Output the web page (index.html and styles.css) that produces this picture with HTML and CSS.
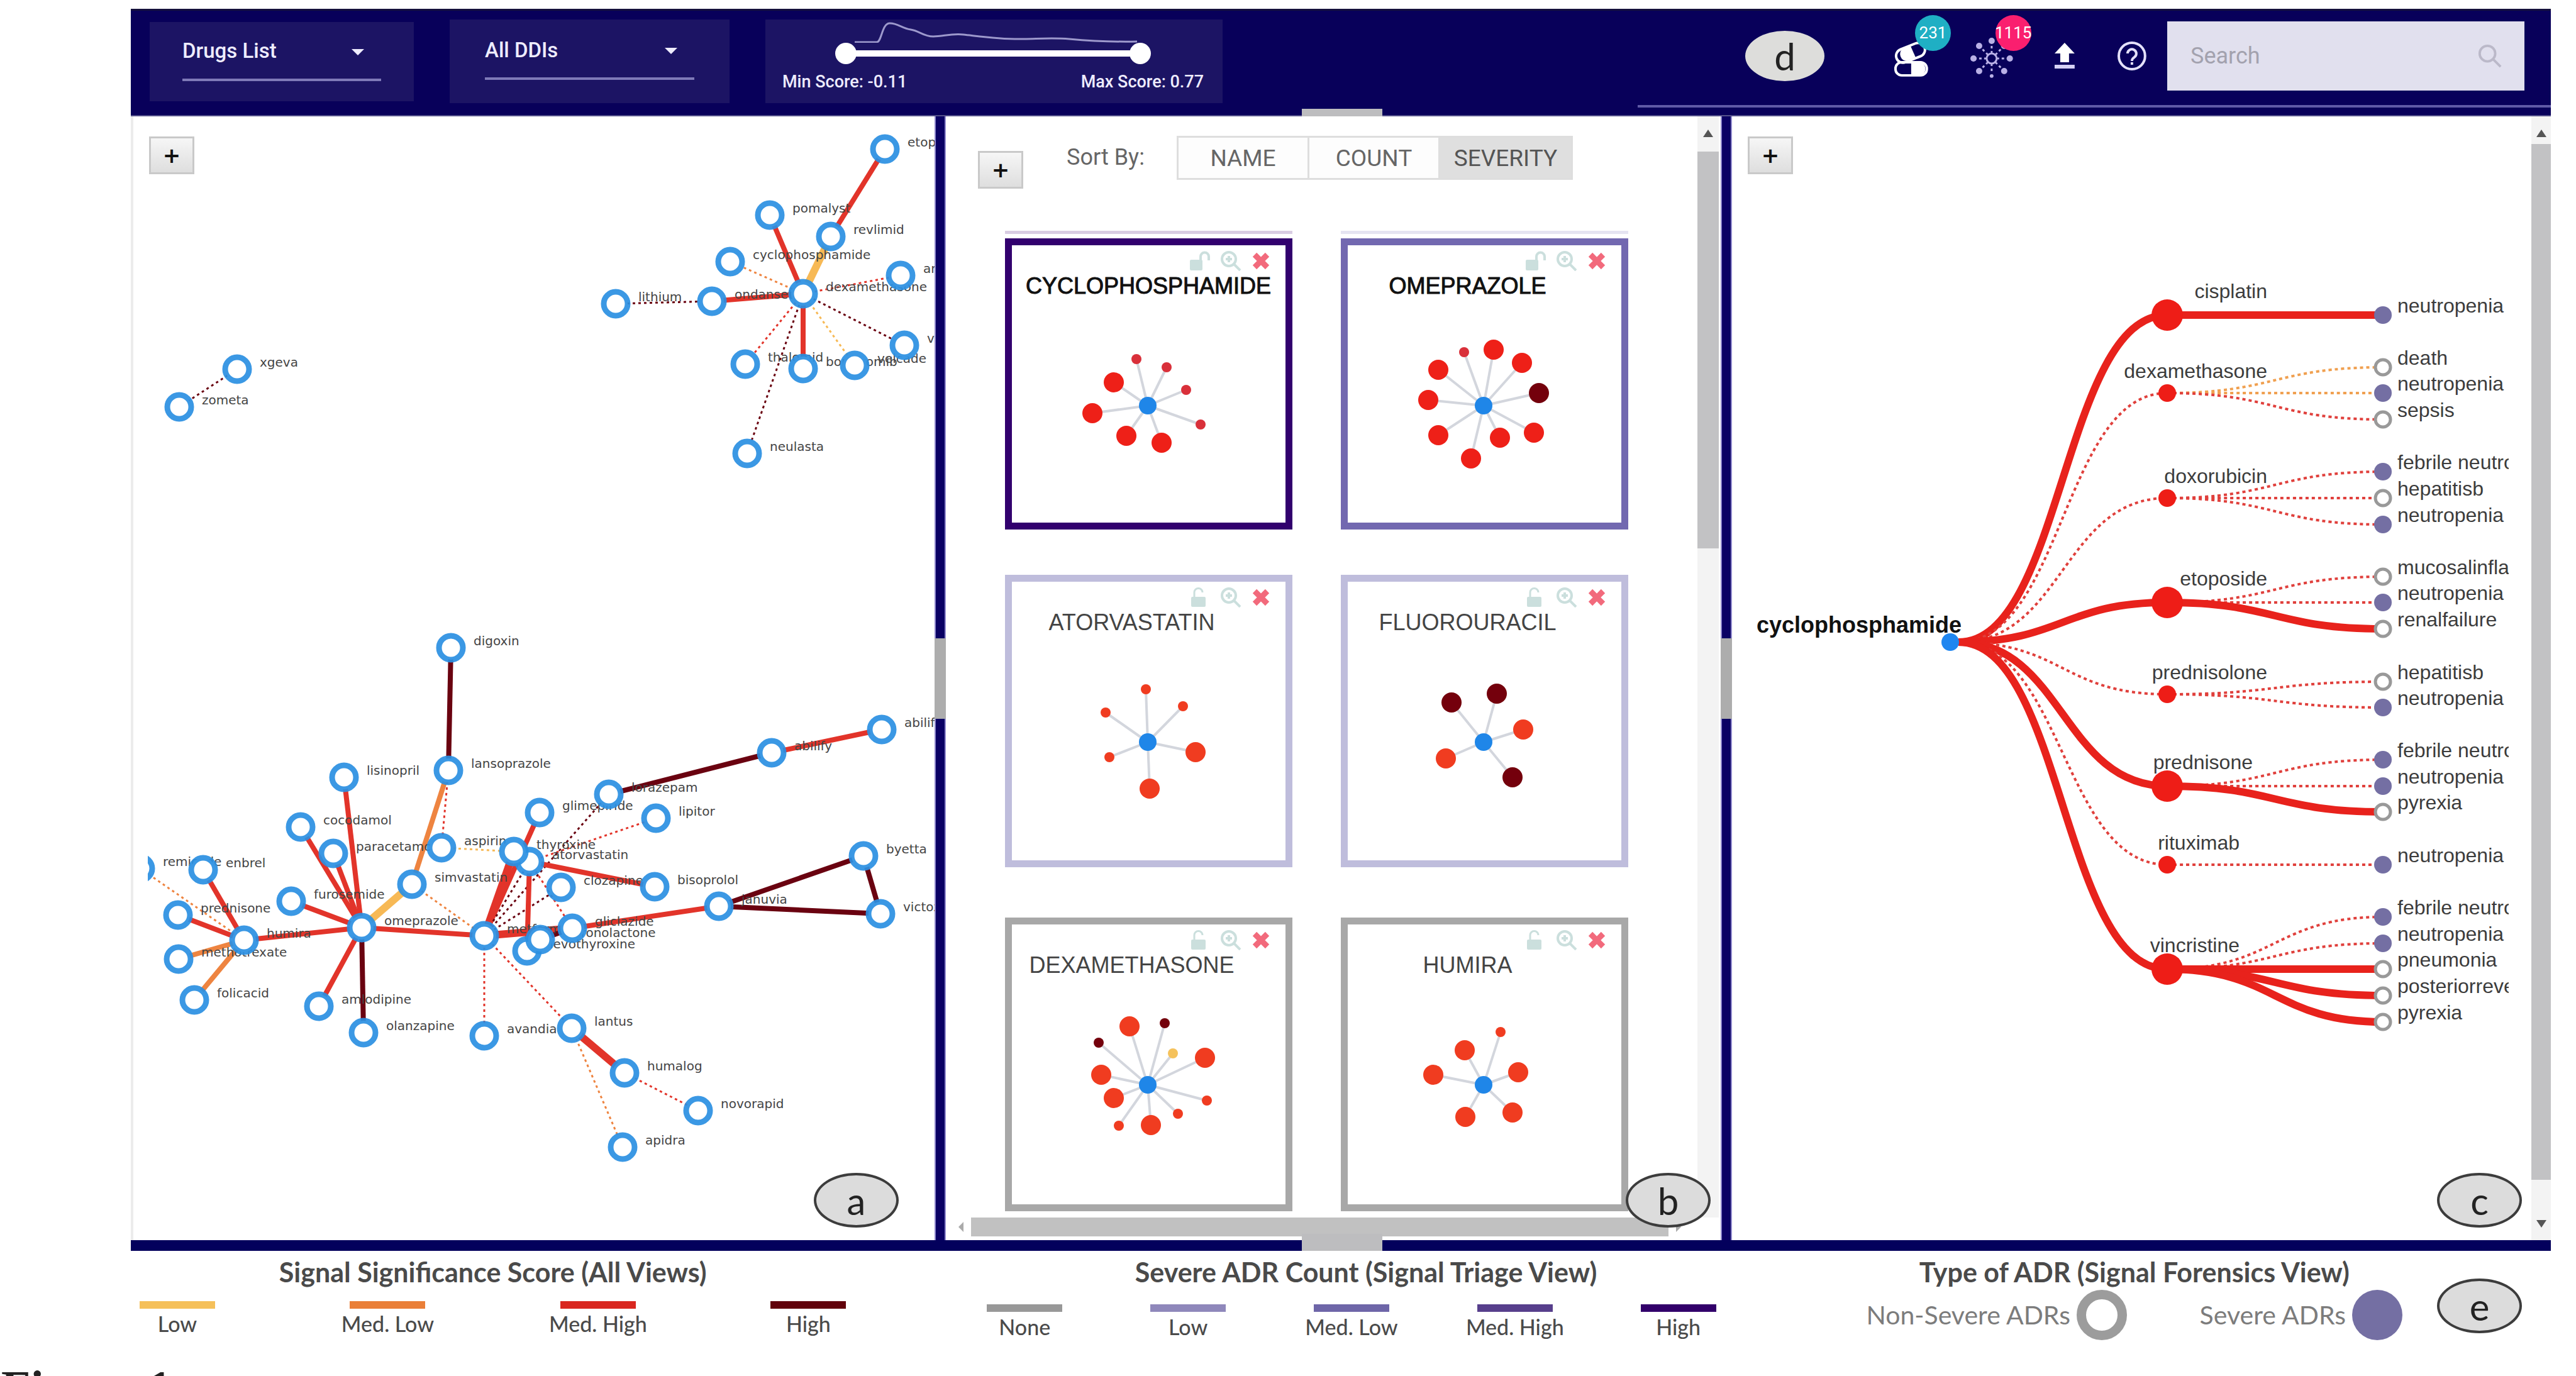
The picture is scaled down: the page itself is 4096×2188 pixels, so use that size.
FILE: index.html
```html
<!DOCTYPE html>
<html lang="en">
<head>
<meta charset="utf-8">
<meta name="viewport" content="width=device-width, initial-scale=1">
<title>Drug Interaction Signals</title>
<link rel="stylesheet" href="styles.css">
</head>
<body>
<svg class="sprite" aria-hidden="true">
  <symbol id="i-unlock" viewBox="0 0 36 32">
    <rect x="1" y="14" width="20" height="17" rx="2" fill="currentColor"/>
    <path d="M18 15V9a6.500 6.500 0 0 1 13 0v6" fill="none" stroke="currentColor" stroke-width="4"/>
  </symbol>
  <symbol id="i-unlock-thin" viewBox="0 0 36 32">
    <rect x="3" y="15" width="23" height="16" rx="2" fill="currentColor"/>
    <path d="M8 15V8a6.500 6.500 0 0 1 13 0" fill="none" stroke="currentColor" stroke-width="3"/>
  </symbol>
  <symbol id="i-zoom" viewBox="0 0 36 32">
    <circle cx="15" cy="13" r="11" fill="none" stroke="currentColor" stroke-width="4"/>
    <path d="M10 13h10M15 8v10M23 21l10 10" fill="none" stroke="currentColor" stroke-width="4"/>
  </symbol>
  <symbol id="i-close" viewBox="0 0 28 28">
    <path d="M4 4l20 20M24 4L4 24" fill="none" stroke="currentColor" stroke-width="9"/>
  </symbol>
</svg>

<div class="app">
  <header class="topbar">
    <div class="filters">
      <div class="filter filter-drugs">
        <div class="picker">
          <select aria-label="Drugs list"><option>Drugs List</option></select>
          <span class="caret"></span>
        </div>
      </div>
      <div class="filter filter-ddis">
        <div class="picker">
          <select aria-label="DDI filter"><option>All DDIs</option></select>
          <span class="caret"></span>
        </div>
      </div>
      <div class="filter filter-score">
        <svg class="histogram" viewBox="0 0 502 37" aria-hidden="true">
          <path d="M31 36H66C74 36 74 7 86 6S106 14 120 16S140 27 156 27S184 22 204 24S262 32 300 31S350 29 372 31S430 36 480 35"/>
        </svg>
        <div class="range">
          <input type="range" aria-label="Min score" min="-0.11" max="0.77" step="0.01" value="-0.11">
          <input type="range" aria-label="Max score" min="-0.11" max="0.77" step="0.01" value="0.77">
        </div>
        <div class="range-labels"><span>Min Score: -0.11</span><span>Max Score: 0.77</span></div>
      </div>
    </div>
    <div class="tools">
      <span class="tag tag-plain">d</span>
      <button class="tool tool-large" aria-label="Drugs">
        <svg viewBox="0 0 70 70" aria-hidden="true">
          <g fill="none" stroke="#fff" stroke-width="4">
            <rect x="10" y="19" width="48" height="22" rx="11" transform="rotate(-22 34 30)"/>
            <rect x="10" y="45" width="50" height="21" rx="10"/>
          </g>
          <path d="M20 25L34 19L42 37L27 43A11 11 0 0 1 20 25Z" fill="#fff"/>
          <path d="M35 45H50A11 11 0 0 1 50 66H35Z" fill="#fff"/>
        </svg>
        <span class="count count-teal">231</span>
      </button>
      <button class="tool tool-large" aria-label="Reactions">
        <svg viewBox="0 0 70 70" aria-hidden="true">
          <g fill="none" stroke="#b9b0e6" stroke-width="3">
            <circle cx="35" cy="39" r="8"/>
            <path d="M35 31V15M35 47V63M27 39H9M43 39H61M29 33L17 21M41 33L53 21M29 45L17 57M41 45L53 57" stroke-dasharray="4 4"/>
          </g>
          <g fill="#b9b0e6">
            <circle cx="35" cy="11" r="5"/><circle cx="35" cy="67" r="3"/><circle cx="6" cy="39" r="5"/><circle cx="64" cy="39" r="5"/>
            <circle cx="15" cy="19" r="5"/><circle cx="55" cy="19" r="5"/><circle cx="15" cy="59" r="5"/><circle cx="55" cy="59" r="5"/>
          </g>
        </svg>
        <span class="count count-pink">1115</span>
      </button>
      <button class="tool" aria-label="Upload">
        <svg viewBox="0 0 48 48" aria-hidden="true"><path d="M24 3L40 20H31V34H17V20H8Z" fill="#fff"/><path d="M8 38H40V44H8Z" fill="#d6d2f5"/></svg>
      </button>
      <button class="tool" aria-label="Help">
        <svg viewBox="0 0 48 48" aria-hidden="true">
          <circle cx="25" cy="24" r="21" fill="none" stroke="#e4e1fb" stroke-width="4"/>
          <path d="M18 20a7 7 0 1 1 11 6c-3 2-4 3-4 6" fill="none" stroke="#e4e1fb" stroke-width="4"/>
          <path d="M23 34h4v4h-4z" fill="#e4e1fb"/>
        </svg>
      </button>
      <div class="search">
        <input type="text" placeholder="Search" aria-label="Search">
        <svg viewBox="0 0 42 42" aria-hidden="true"><circle cx="17" cy="17" r="13"/><path d="M27 27L39 39"/></svg>
      </div>
    </div>
    <span class="grip grip-top"></span>
  </header>

  <main class="workspace">
    <section class="panel" aria-label="Signal overview">
      <svg class="network" id="network"></svg>
      <button class="add add-over">+</button>
      <span class="tag tag-a">a</span>
    </section>
    <div class="splitter"><span class="splitter-grip"></span></div>

    <section class="panel triage" aria-label="Signal triage">
      <div class="triage-body">
        <div class="sortbar">
          <button class="add add-low">+</button>
          <span class="sort-label">Sort By:</span>
          <div class="sort-group">
            <button>NAME</button><button>COUNT</button><button class="active">SEVERITY</button>
          </div>
        </div>
        <div class="lanes"><span class="lane lane-high"></span><span class="lane lane-mid"></span></div>
        <div class="cards">
          <article class="card sev-high">
            <div class="card-icons"><svg class="ic"><use href="#i-unlock"/></svg><svg class="ic"><use href="#i-zoom"/></svg><svg class="ic ic-close"><use href="#i-close"/></svg></div>
            <h3>CYCLOPHOSPHAMIDE</h3><svg class="star" data-star="cyclophosphamide"></svg>
          </article>
          <article class="card sev-medlow">
            <div class="card-icons"><svg class="ic"><use href="#i-unlock"/></svg><svg class="ic"><use href="#i-zoom"/></svg><svg class="ic ic-close"><use href="#i-close"/></svg></div>
            <h3>OMEPRAZOLE</h3><svg class="star" data-star="omeprazole"></svg>
          </article>
          <article class="card sev-low">
            <div class="card-icons"><svg class="ic"><use href="#i-unlock-thin"/></svg><svg class="ic"><use href="#i-zoom"/></svg><svg class="ic ic-close"><use href="#i-close"/></svg></div>
            <h3>ATORVASTATIN</h3><svg class="star" data-star="atorvastatin"></svg>
          </article>
          <article class="card sev-low">
            <div class="card-icons"><svg class="ic"><use href="#i-unlock-thin"/></svg><svg class="ic"><use href="#i-zoom"/></svg><svg class="ic ic-close"><use href="#i-close"/></svg></div>
            <h3>FLUOROURACIL</h3><svg class="star" data-star="fluorouracil"></svg>
          </article>
          <article class="card sev-none">
            <div class="card-icons"><svg class="ic"><use href="#i-unlock-thin"/></svg><svg class="ic"><use href="#i-zoom"/></svg><svg class="ic ic-close"><use href="#i-close"/></svg></div>
            <h3>DEXAMETHASONE</h3><svg class="star" data-star="dexamethasone"></svg>
          </article>
          <article class="card sev-none">
            <div class="card-icons"><svg class="ic"><use href="#i-unlock-thin"/></svg><svg class="ic"><use href="#i-zoom"/></svg><svg class="ic ic-close"><use href="#i-close"/></svg></div>
            <h3>HUMIRA</h3><svg class="star" data-star="humira"></svg>
          </article>
        </div>
      </div>
      <div class="vscroll triage-vscroll"><span class="arrow arrow-up"></span><span class="thumb"></span></div>
      <div class="hscroll"><span class="arrow arrow-left"></span><span class="thumb"></span><span class="arrow arrow-right"></span></div>
      <span class="tag tag-b">b</span>
    </section>
    <div class="splitter"><span class="splitter-grip"></span></div>

    <section class="panel forensics" aria-label="Signal forensics">
      <svg class="tree" id="tree"></svg>
      <div class="vscroll forensics-vscroll"><span class="arrow arrow-up"></span><span class="thumb"></span><span class="arrow arrow-down"></span></div>
      <button class="add add-over">+</button>
      <span class="tag tag-c">c</span>
    </section>
  </main>
  <div class="bottombar"><span class="grip grip-bottom"></span></div>

  <footer class="legend">
    <div class="legend-score">
      <h2>Signal Significance Score (All Views)</h2>
      <ul class="swatches">
        <li><span class="bar bar-yellow"></span>Low</li>
        <li><span class="bar bar-orange"></span>Med. Low</li>
        <li><span class="bar bar-red"></span>Med. High</li>
        <li><span class="bar bar-dark"></span>High</li>
      </ul>
    </div>
    <div class="legend-count">
      <h2>Severe ADR Count (Signal Triage View)</h2>
      <ul class="swatches">
        <li><span class="bar bar-none"></span>None</li>
        <li><span class="bar bar-low"></span>Low</li>
        <li><span class="bar bar-medlow"></span>Med. Low</li>
        <li><span class="bar bar-medhigh"></span>Med. High</li>
        <li><span class="bar bar-high"></span>High</li>
      </ul>
    </div>
    <div class="legend-type">
      <h2>Type of ADR (Signal Forensics View)</h2>
      <div class="types">
        <span class="type">Non-Severe ADRs <i class="dot dot-ring"></i></span>
        <span class="type">Severe ADRs <i class="dot dot-full"></i></span>
      </div>
    </div>
    <span class="tag tag-e">e</span>
  </footer>
</div>
<p class="caption">Figure 1</p>
<script src="app.js"></script>
</body>
</html>
```
FILE: styles.css
```css
* { box-sizing: border-box; }
html, body { height: 100%; margin: 0; overflow: hidden; background: #fff; }
body { display: flex; flex-direction: column; font-family: Roboto, sans-serif; color: #333; }
h2, h3, p, ul { margin: 0; padding: 0; }
button, select, input { font: inherit; color: inherit; margin: 0; padding: 0; border: 0; background: none; }
.sprite { position: absolute; width: 0; height: 0; }

.app { flex: 1; min-height: 0; display: flex; flex-direction: column; padding: 14px 40px 0 208px; }

/* top bar */
.topbar { position: relative; flex: none; height: 171px; display: flex; justify-content: space-between; background: #08005a; border-top: 3px solid #14103c; border-bottom: 2px solid #55528c; }
.filters { display: flex; align-items: center; gap: 57px; padding: 14px 0 19px 30px; }
.filter { background: #1c1464; color: #eeecff; font-weight: 500; }
.filter-drugs { width: 420px; height: 126px; padding: 20px 52px 0; }
.filter-ddis { width: 445px; height: 133px; padding: 22px 56px 0; }
.picker { position: relative; border-bottom: 4px solid #7f7ab8; }
.picker select { display: block; width: 100%; height: 70px; padding-bottom: 18px; font-size: 33px; appearance: none; }
.caret { position: absolute; right: 27px; top: 23px; border: 10px solid transparent; border-top: 10px solid #eeecff; border-bottom: 0; pointer-events: none; }
.filter-score { width: 727px; height: 133px; padding: 0 30px 0 27px; }
.histogram { display: block; width: 502px; height: 37px; margin: 0 auto; fill: none; stroke: #9d99cc; stroke-width: 3; }
.range { display: grid; width: 502px; margin: 0 auto; }
.range input { grid-area: 1 / 1; width: 100%; height: 34px; appearance: none; pointer-events: none; }
.range input:first-child { background: linear-gradient(#fff, #fff) center / 470px 10px no-repeat; }
.range input::-webkit-slider-thumb { appearance: none; width: 34px; height: 34px; border-radius: 50%; background: #fff; pointer-events: auto; }
.range-labels { display: flex; justify-content: space-between; margin-top: 10px; font-size: 27px; line-height: 36px; }

.tools { display: flex; align-items: center; width: 1452px; height: 154px; padding: 0 42px 6px 171px; border-bottom: 4px solid #5f5aa6; }
.tool { position: relative; width: 48px; height: 48px; margin-right: 58px; }
.tool-large { width: 70px; height: 70px; }
.tool svg { display: block; width: 100%; height: 100%; }
.count { position: absolute; left: 41px; top: -30px; width: 57px; height: 57px; border-radius: 50%; font-size: 26px; line-height: 57px; text-align: center; color: #fff; display: flex; justify-content: center; }
.count-teal { background: #1fafc4; }
.count-pink { background: #fa1f6f; }
.search { display: flex; align-items: center; flex: 1; height: 110px; margin-left: -25px; padding: 0 35px 0 37px; background: #e1e0ee; }
.search input { flex: 1; min-width: 0; font-size: 36px; color: #555; outline: 0; }
.search input::placeholder { color: #a3a2ae; opacity: 1; }
.search svg { width: 40px; height: 40px; fill: none; stroke: #bbb9c9; stroke-width: 4; }

.grip { position: absolute; left: 50%; margin-left: -62px; width: 128px; background: #bdbdbf; }
.grip-top { bottom: -6px; height: 16px; }
.grip-bottom { bottom: 0; height: 27px; }

/* workspace */
.workspace { flex: 1; min-height: 0; display: grid; grid-template-columns: minmax(0, 1278fr) 18px minmax(0, 1232fr) 18px minmax(0, 1302fr); grid-template-rows: minmax(0, 1fr); }
.panel { position: relative; min-width: 0; background: #fff; }
.panel:first-child { border-left: 4px solid #ececec; padding-left: 23px; }
.splitter { display: flex; align-items: center; background: #0a0064; border: solid #8f88cc; border-width: 0 2px; }
.splitter-grip { flex: 1; height: 128px; margin: 0 -2px; background: #adadad; }
.network, .tree { display: block; width: 100%; height: 100%; }
.bottombar { position: relative; flex: none; height: 17px; background: #03005c; }

.add { width: 72px; height: 60px; border: 3px solid #c9c9c9; background: linear-gradient(#f6f6f6, #dedede); font: bold 34px/50px "DejaVu Sans", sans-serif; color: #111; text-align: center; }
.add-over { position: absolute; left: 25px; top: 32px; }
.add-low { margin-top: 24px; }

.tag { display: flex; align-items: center; justify-content: center; flex: none; width: 135px; height: 87px; border: 4px solid #3c3c3c; border-radius: 50%; background: #dcdcdc; font: 60px/60px Lato, sans-serif; color: #222; }
.tag-plain { width: 126px; height: 80px; border: 0; margin-right: 103px; background: #dddddb; }
.tag-a, .tag-b, .tag-c { position: absolute; bottom: 20px; }
.tag-a { right: 57px; }
.tag-b { right: 16px; }
.tag-c { right: 46px; }

/* triage */
.triage { display: grid; grid-template-columns: minmax(0, 1fr) 34px; grid-template-rows: minmax(0, 1fr) 36px; padding-right: 3px; }
.triage-body { overflow: hidden; }
.sortbar { display: flex; align-items: flex-start; padding: 31px 0 0 51px; height: 182px; }
.sort-label { width: 175px; margin-left: 69px; font-size: 36px; line-height: 69px; color: #666; }
.sort-group { display: flex; border: 3px solid #dedede; }
.sort-group button { width: 208px; height: 64px; font-size: 37px; color: #666; background: #fdfdfd; border-right: 3px solid #dedede; }
.sort-group button:last-child { border-right: 0; }
.sort-group .active { background: #dfdfdf; color: #555; }
.lanes, .cards { display: grid; grid-template-columns: 457px 457px; column-gap: 77px; padding-left: 94px; }
.lane { height: 5px; margin-bottom: 7px; }
.lane-high { background: #d9cde2; }
.lane-mid { background: #e5e4f1; }
.cards { grid-template-rows: 463px 465px 475px; row-gap: 72px; }
.card { border: 11px solid; }
.card h3 { margin-top: 5px; padding: 0 76px 0 22px; font: 36px/40px "Liberation Sans", Arial, sans-serif; text-align: center; white-space: nowrap; color: #444; }
.card-icons { display: flex; justify-content: flex-end; align-items: center; gap: 12px; height: 30px; margin-top: 10px; padding-right: 25px; color: #cbdfdd; }
.ic { width: 36px; height: 32px; }
.ic-close { width: 28px; height: 28px; margin-left: 4px; color: #f26a7c; }
.star { display: block; width: 300px; height: 230px; margin: 53px auto 0; overflow: visible; }
.sev-high { border-color: #32006e; }
.sev-medlow { border-color: #7268b0; }
.sev-high h3, .sev-medlow h3 { color: #111; -webkit-text-stroke: 1px #111; }
.sev-low { border-color: #bfbddc; }
.sev-none { border-color: #a8a8a8; margin-top: 8px; }

/* scroll bars */
.vscroll { display: flex; flex-direction: column; align-items: center; background: #f3f3f3; }
.vscroll .thumb { width: 100%; background: #c2c2c4; }
.triage-vscroll .thumb { height: 631px; margin-top: 23px; }
.arrow { border: 8px solid transparent; }
.arrow-up { margin-top: 21px; border-top: 0; border-bottom: 12px solid #555; }
.arrow-down { margin: 64px 0 20px; border-bottom: 0; border-top: 12px solid #555; }
.arrow-left { border-left: 0; border-right-color: #aaa; }
.arrow-right { border-right: 0; border-left-color: #aaa; }
.hscroll { grid-column: 1 / -1; display: flex; align-items: center; gap: 12px; height: 30px; padding: 0 60px 0 20px; }
.hscroll .thumb { flex: 1; height: 100%; background: #c1c1c1; }

/* forensics */
.forensics { display: grid; grid-template-columns: minmax(0, 1fr) 31px; column-gap: 36px; }
.forensics-vscroll .thumb { flex: 1; margin-top: 11px; }

/* diagrams */
.solid { stroke-width: 8; }
.thick { stroke-width: 12; }
.dotted { stroke-width: 3; stroke-dasharray: 4 5; }
.ring { fill: #fff; stroke: #2a8fe2; stroke-width: 9; stroke-opacity: .92; }
.network text { font: 20px "DejaVu Sans", sans-serif; fill: #444; }
.spoke { stroke: #d3d6dd; stroke-width: 4; }
.link { fill: none; stroke: #e8221c; stroke-width: 12; }
.link-dotted { fill: none; stroke-width: 4; stroke-dasharray: 5 5; }
.tree text { font: 32px "Liberation Sans", Arial, sans-serif; fill: #3c3c3c; }
.tree .root { font: bold 36px "Liberation Sans", Arial, sans-serif; fill: #111; }
.leaf-severe { fill: #746fa3; }
.leaf-plain { fill: #fff; stroke: #999; stroke-width: 5; }

/* legend */
.legend { flex: none; height: 179px; display: grid; grid-template-columns: 14fr 1124fr 224fr 1160fr 239fr 853fr 55fr 133fr 46fr; padding-top: 10px; font-family: Lato, sans-serif; color: #4a4a4a; }
.legend h2 { font-size: 43px; line-height: 48px; text-align: center; white-space: nowrap; }
.legend-score { grid-column: 2; }
.legend-count { grid-column: 4; }
.legend-count h2 { padding-left: 46px; }
.legend-type { grid-column: 6; }
.tag-e { grid-column: 8; margin-top: 34px; }
.swatches { display: flex; justify-content: space-between; list-style: none; margin-top: 22px; font-size: 34px; font-weight: 500; line-height: 36px; }
.legend-count .swatches { margin-top: 27px; }
.swatches li { width: 120px; display: flex; flex-direction: column; align-items: center; white-space: nowrap; }
.bar { width: 120px; height: 12px; margin-bottom: 6px; }
.bar-yellow { background: #f5c05a; }
.bar-orange { background: #ea7f38; }
.bar-red { background: #d92720; }
.bar-dark { background: #62020c; }
.bar-none { background: #989898; }
.bar-low { background: #8f88bb; }
.bar-medlow { background: #6e66a8; }
.bar-medhigh { background: #573f8c; }
.bar-high { background: #32006a; }
.types { display: flex; justify-content: space-between; margin-top: 4px; }
.type { display: flex; align-items: center; gap: 10px; font-size: 41px; line-height: 80px; color: #7c7c7c; }
.dot { width: 80px; height: 80px; border-radius: 50%; }
.dot-ring { border: 15px solid #9c9c9c; }
.dot-full { background: #746fa3; }

.caption { flex: none; height: 20px; padding-left: 2px; font: bold 76px/76px "Liberation Serif", serif; color: #222; white-space: nowrap; }
```
FILE: app.js
```js
const NS = 'http://www.w3.org/2000/svg';
const UNIT = 4096 / 1568;
const COLORS = { L: '#f7b955', ML: '#ee8440', MH: '#e2342a', H: '#6a0210' };

function add(parent, name, attrs, text) {
  const el = document.createElementNS(NS, name);
  for (const key in attrs) el.setAttribute(key, attrs[key]);
  if (text) el.textContent = text;
  parent.appendChild(el);
  return el;
}

/* Overview network: id -> [x, y, label] */
const nodes = {
  xgeva: [144.5, 225, 'xgeva'], zometa: [109, 248, 'zometa'],
  etoposide: [538.6, 90.8, 'etoposide'], pomalyst: [468.5, 131, 'pomalyst'], revlimid: [506, 144, 'revlimid'],
  cyclo: [444.5, 159.3, 'cyclophosphamide'], ondan: [433.4, 183.7, 'ondansetron'], lithium: [375, 185, 'lithium'],
  aredia: [548.5, 167.8, 'aredia'], thalomid: [453.7, 222, 'thalomid'], bort: [489.1, 224.5, 'bortezomib'],
  velcade: [520.3, 222.7, 'velcade'], vinc: [550.5, 210.5, 'vincristine'], neulasta: [455, 276.4, 'neulasta'],
  dexa: [489.1, 179, 'dexamethasone'],
  digoxin: [274.5, 394.5, 'digoxin'], lanso: [273, 469.2, 'lansoprazole'], lisin: [209.4, 473.6, 'lisinopril'],
  coco: [183, 503.7, 'cocodamol'], para: [202.9, 519.8, 'paracetamol'], aspirin: [268.9, 516.3, 'aspirin'],
  simva: [250.9, 538.4, 'simvastatin'], furo: [177.2, 548.9, 'furosemide'], ome: [220, 564.8, 'omeprazole'],
  humira: [148.4, 572.7, 'humira'], remi: [85.5, 529, 'remicade'], enbrel: [123.6, 529.8, 'enbrel'],
  pred: [108.2, 557.1, 'prednisone'], metho: [108.7, 583.9, 'methotrexate'], folic: [118.2, 608.9, 'folicacid'],
  amlo: [194, 612.9, 'amlodipine'], olan: [221.4, 628.7, 'olanzapine'], avandia: [294.9, 630.8, 'avandia'],
  glime: [328.7, 494.8, 'glimepiride'], ator: [322.4, 524.7, 'atorvastatin'], thyro: [312.9, 518.5, 'thyroxine'],
  cloza: [341.4, 540.3, 'clozapine'], biso: [398.6, 540.1, 'bisoprolol'], loraz: [370.6, 483.7, 'lorazepam'],
  lipitor: [399.5, 498.5, 'lipitor'], abilify: [469.8, 458.5, 'abilify'], abil: [536.9, 444.5, 'abilify'],
  byetta: [525.9, 521.3, 'byetta'], victoza: [535.9, 556.7, 'victoza'], januvia: [437.7, 552.1, 'januvia'],
  glic: [348.6, 565.5, 'gliclazide'], levo: [320.7, 579.1, 'levothyroxine'], spiro: [328.8, 572.1, 'spironolactone'],
  metf: [294.7, 569.9, 'metformin'], lantus: [348.2, 626.1, 'lantus'], humalog: [380.1, 653.5, 'humalog'],
  novo: [425.2, 676.3, 'novorapid'], apidra: [379, 698.5, 'apidra']
};
const edges = [
  'xgeva zometa H dotted', 'etoposide revlimid MH solid', 'dexa revlimid L thick', 'dexa pomalyst MH solid',
  'dexa cyclo ML dotted', 'dexa ondan MH solid', 'lithium ondan H dotted', 'dexa aredia MH dotted',
  'dexa thalomid MH dotted', 'dexa neulasta H dotted', 'dexa bort MH solid', 'dexa velcade L dotted', 'dexa vinc H dotted',
  'digoxin lanso H solid', 'lanso simva ML solid', 'lanso aspirin MH dotted', 'simva ome L thick', 'aspirin thyro L dotted',
  'lisin ome MH solid', 'coco ome MH solid', 'para ome MH solid', 'furo ome MH solid', 'ome humira MH solid',
  'humira enbrel MH solid', 'humira pred MH solid', 'humira metho ML solid', 'humira folic ML solid', 'humira remi ML dotted',
  'ome amlo MH solid', 'ome olan H solid', 'ome metf MH solid', 'simva metf ML dotted', 'metf glime MH solid',
  'metf thyro MH thick', 'metf ator H dotted', 'metf cloza H dotted', 'metf glic MH thick', 'metf avandia MH dotted',
  'metf lantus MH dotted', 'metf loraz H dotted', 'ator levo MH solid', 'ator biso MH solid', 'ator lipitor MH dotted', 'ator glic MH dotted',
  'spiro glic H solid', 'glic januvia MH solid', 'januvia byetta H solid', 'januvia victoza H solid', 'byetta victoza H solid',
  'loraz abilify H solid', 'abilify abil MH solid', 'lantus humalog MH thick', 'humalog novo MH dotted', 'lantus apidra ML dotted'
];

function drawNetwork() {
  const svg = document.getElementById('network');
  const k = svg.clientWidth / 479;
  const X = v => Math.round((v - 90) * k);
  const Y = v => Math.round((v - 71) * k);
  for (const edge of edges) {
    const [a, b, tone, kind] = edge.split(' ');
    add(svg, 'line', { x1: X(nodes[a][0]), y1: Y(nodes[a][1]), x2: X(nodes[b][0]), y2: Y(nodes[b][1]), stroke: COLORS[tone], class: kind });
  }
  for (const id in nodes) {
    const [x, y, label] = nodes[id];
    add(svg, 'text', { x: X(x) + 36, y: Y(y) - 4 }, label);
  }
  for (const id in nodes) add(svg, 'circle', { cx: X(nodes[id][0]), cy: Y(nodes[id][1]), r: 19, class: 'ring' });
}

/* Triage stars: [dx, dy, radius, colour] around the drug */
const R = '#ee2018', O = '#f03c20', D = '#74000c', S = '#d9303a';
const stars = {
  cyclophosphamide: [[-7, -28.5, 3, S], [11.5, -23.5, 3, S], [23.5, -9.5, 3, S], [32, 11.5, 3, S], [8.5, 22.5, 6, R], [-13, 18.5, 6, R], [-33.5, 4.5, 6, R], [-20.5, -14, 6, R]],
  omeprazole: [[-12, -32.5, 3, S], [6, -34, 6, R], [23.5, -26, 6, R], [33.5, -7.5, 6, D], [30.5, 16.5, 6, R], [10, 19.5, 6, R], [-7.5, 32, 6, R], [-27.5, 18, 6, R], [-33.5, -3.5, 6, R], [-27.5, -22, 6, R]],
  atorvastatin: [[-1, -32, 3, O], [21.5, -22, 3, O], [29, 6, 6, O], [1, 28.5, 6, O], [-23.5, 9, 3, O], [-25.5, -18, 3, O]],
  fluorouracil: [[-19.5, -24, 6, D], [8, -29.5, 6, D], [24, -7.5, 6, O], [17.5, 21.5, 6, D], [-23, 10, 6, O]],
  dexamethasone: [[-11, -35.5, 6, O], [10.5, -37.5, 3, D], [15.5, -19, 3, '#f5c25c'], [35, -16.5, 6, O], [36, 9.5, 3, O], [18.5, 17.5, 3, O], [2, 24.5, 6, O], [-17.5, 25, 3, O], [-20.5, 8, 6, O], [-28.5, -6, 6, O], [-30, -25.5, 3, D]],
  humira: [[10.5, -32, 3, O], [-11.5, -21, 6, O], [-30.5, -6, 6, O], [21, -7.5, 6, O], [17.5, 17, 6, O], [-11, 19.5, 6, O]]
};

function drawStars() {
  for (const svg of document.querySelectorAll('.star')) {
    const g = add(svg, 'g', { transform: 'translate(148 117)' });
    const points = stars[svg.dataset.star];
    for (const [x, y] of points) add(g, 'line', { x1: 0, y1: 0, x2: Math.round(x * UNIT), y2: Math.round(y * UNIT), class: 'spoke' });
    for (const [x, y, r, fill] of points) add(g, 'circle', { cx: Math.round(x * UNIT), cy: Math.round(y * UNIT), r: r === 6 ? 16 : 8, fill });
    add(g, 'circle', { r: 14, fill: '#1f86e8' });
  }
}

/* Forensics tree: drug, y, strong, label end x, leaves [label, severe, link] */
const tree = [
  ['cisplatin', 192, true, 1380, [['neutropenia', 1, 'solid']]],
  ['dexamethasone', 239.5, false, 1380, [['death', 0, 'ML'], ['neutropenia', 1, 'ML'], ['sepsis', 0, 'MH']]],
  ['doxorubicin', 303.4, false, 1380, [['febrile neutropenia', 1, 'MH'], ['hepatitisb', 0, 'MH'], ['neutropenia', 1, 'MH']]],
  ['etoposide', 367, true, 1380, [['mucosalinflammation', 0, 'MH'], ['neutropenia', 1, 'MH'], ['renalfailure', 0, 'solid']]],
  ['prednisolone', 423, false, 1380, [['hepatitisb', 0, 'MH'], ['neutropenia', 1, 'MH']]],
  ['prednisone', 478.6, true, 1371, [['febrile neutropenia', 1, 'MH'], ['neutropenia', 1, 'MH'], ['pyrexia', 0, 'solid']]],
  ['rituximab', 526.5, false, 1363, [['neutropenia', 1, 'MH']]],
  ['vincristine', 590.3, true, 1363, [['febrile neutropenia', 1, 'MH'], ['neutropenia', 1, 'MH'], ['pneumonia', 0, 'solid'], ['posteriorreversible', 0, 'solid'], ['pyrexia', 0, 'solid']]]
];

function drawTree() {
  const svg = document.getElementById('tree');
  const k = svg.clientWidth / 472.8;
  const X = v => Math.round((v - 1054.2) * k);
  const Y = v => Math.round((v - 71) * k);
  const curve = (x1, y1, x2, y2) => `M${x1} ${y1}C${(x1 + x2) / 2} ${y1} ${(x1 + x2) / 2} ${y2} ${x2} ${y2}`;
  const root = [X(1192), Y(391)], mid = X(1319), end = X(1450.6);
  const link = (d, kind) => kind === 'solid'
    ? add(svg, 'path', { d, class: 'link' })
    : add(svg, 'path', { d, class: 'link-dotted', stroke: kind === 'ML' ? '#f0a050' : '#e0403c' });
  const marks = [];
  for (const [name, y, strong, labelEnd, leaves] of tree) {
    link(curve(root[0], root[1], mid, Y(y)), strong ? 'solid' : 'MH');
    const last = leaves.length - 1;
    const first = leaves.length === 5 ? 2 : last / 2;
    leaves.forEach(([label, severe, kind], i) => {
      const ly = Y(y + (i - first) * 15.94);
      link(curve(mid, Y(y), end, ly), kind);
      marks.push(() => {
        add(svg, 'circle', { cx: end, cy: ly, r: severe ? 14 : 12, class: severe ? 'leaf-severe' : 'leaf-plain' });
        add(svg, 'text', { x: X(1459.2), y: ly - 4 }, label);
      });
    });
    marks.push(() => {
      add(svg, 'circle', { cx: mid, cy: Y(y), r: strong ? 25 : 14, fill: '#ee1d17' });
      add(svg, 'text', { x: X(labelEnd), y: Y(y) - (strong ? 27 : 24), 'text-anchor': 'end' }, name);
    });
  }
  marks.forEach(draw => draw());
  add(svg, 'circle', { cx: X(1187), cy: root[1], r: 14, fill: '#1f86f0' });
  add(svg, 'text', { x: X(1069), y: Y(385.4), class: 'root' }, 'cyclophosphamide');
}

drawNetwork();
drawStars();
drawTree();
```
